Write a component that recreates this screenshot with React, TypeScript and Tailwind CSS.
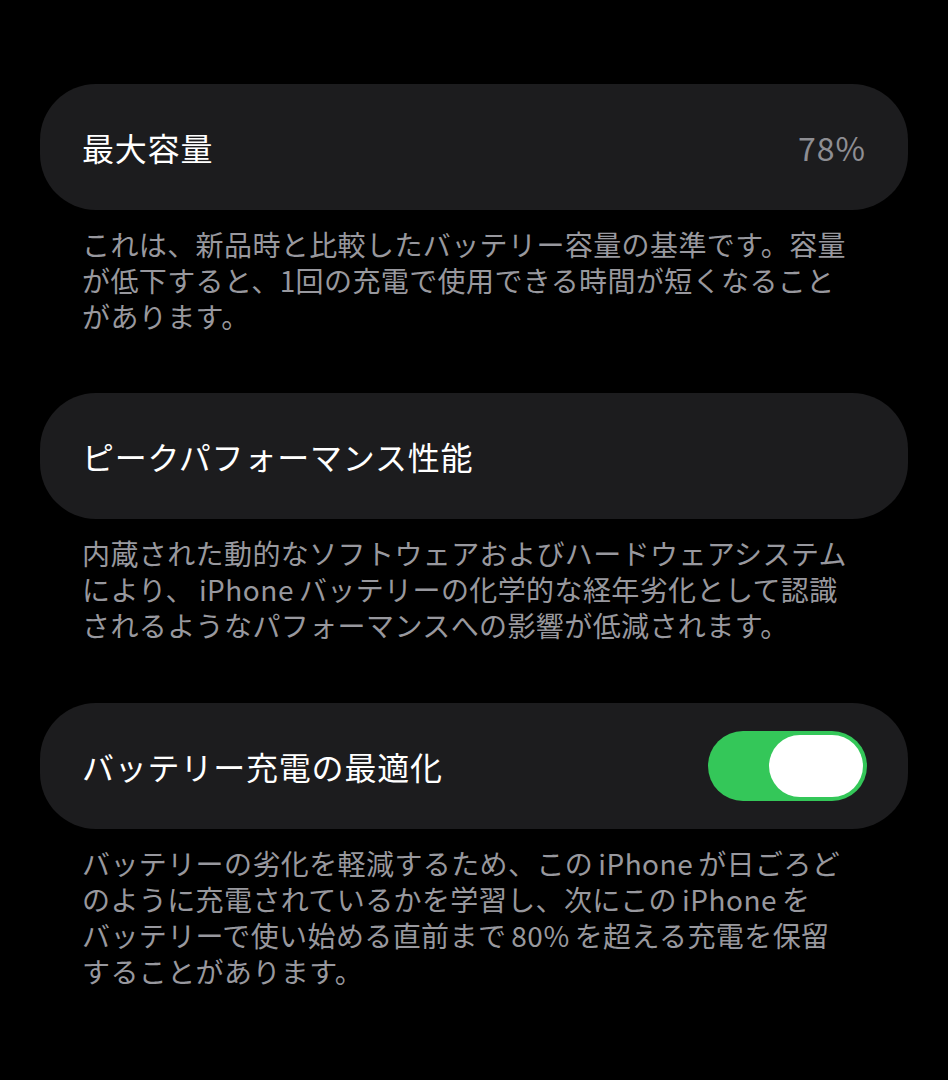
function Latin({ children }: { children: React.ReactNode }) {
  return <span className="inline-block leading-[36px] mx-[5px] tracking-[0.5px]">{children}</span>;
}

export default function App() {
  const font = { fontFamily: '"Noto Sans CJK JP", "Noto Sans", sans-serif' };

  return (
    <div className="min-h-screen w-full bg-black pt-[84px] px-[40px] text-white" style={font}>
      {/* 最大容量 */}
      <div className="h-[126px] rounded-[56px] bg-[#1c1c1e] pl-[42px] pr-[42px] flex items-center justify-between">
        <span className="text-[32px] leading-none tracking-[0.8px]">最大容量</span>
        <span className="text-[32px] leading-none tracking-[1px] text-[#8e8e93]">78%</span>
      </div>
      <p className="mt-[16px] pl-[42px] text-[28px] leading-[36px] tracking-[0.4px] text-[#98989e]">
        これは、新品時と比較したバッテリー容量の基準です。容量
        <br />
        が低下すると、1回の充電で使用できる時間が短くなること
        <br />
        があります。
      </p>

      {/* ピークパフォーマンス性能 */}
      <div className="mt-[59px] h-[126px] rounded-[56px] bg-[#1c1c1e] pl-[42px] pr-[42px] flex items-center">
        <span className="text-[32px] leading-none tracking-[0.8px]">ピークパフォーマンス性能</span>
      </div>
      <p className="mt-[16px] pl-[42px] text-[28px] leading-[36px] tracking-[0.4px] text-[#98989e]">
        内蔵された動的なソフトウェアおよびハードウェアシステム
        <br />
        により、<Latin>iPhone</Latin>バッテリーの化学的な経年劣化として認識
        <br />
        されるようなパフォーマンスへの影響が低減されます。
      </p>

      {/* バッテリー充電の最適化 */}
      <div className="mt-[60px] h-[126px] rounded-[56px] bg-[#1c1c1e] pl-[42px] pr-[41px] flex items-center justify-between">
        <span className="text-[32px] leading-none tracking-[0.8px]">バッテリー充電の最適化</span>
        <div className="w-[159px] h-[70px] rounded-full bg-[#34c759] flex items-center justify-end pr-[4px]">
          <div className="w-[94px] h-[62px] rounded-full bg-white" />
        </div>
      </div>
      <p className="mt-[16px] pl-[42px] text-[28px] leading-[36px] tracking-[0.4px] text-[#98989e]">
        バッテリーの劣化を軽減するため、この<Latin>iPhone</Latin>が日ごろど
        <br />
        のように充電されているかを学習し、次にこの<Latin>iPhone</Latin>を
        <br />
        バッテリーで使い始める直前まで<Latin>80%</Latin>を超える充電を保留
        <br />
        することがあります。
      </p>
    </div>
  );
}
